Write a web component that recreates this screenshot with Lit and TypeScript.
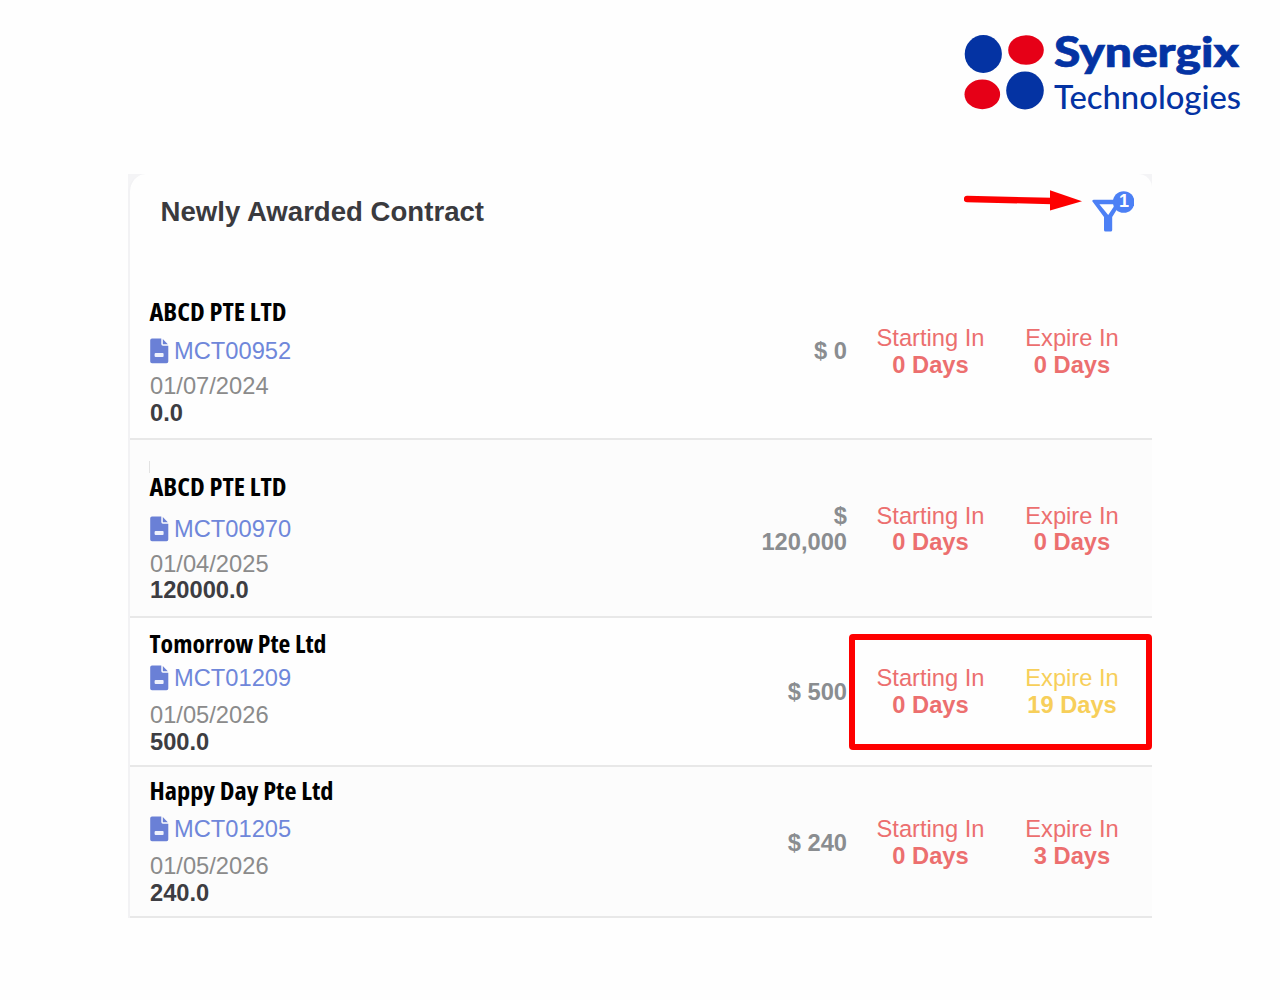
import { LitElement, html, css, svg, nothing } from 'lit';
import { customElement, property } from 'lit/decorators.js';
import { classMap } from 'lit/directives/class-map.js';

interface Contract {
    name: string;
    nameWidth: number;
    code: string;
    date: string;
    value: string;
    amount: string;
    starting: string;
    expire: string;
    layout: string;
    warn?: boolean;
    marked?: boolean;
    tick?: boolean;
}

const CONTRACTS: Contract[] = [
    { name: 'ABCD PTE LTD', nameWidth: 137, code: 'MCT00952', date: '01/07/2024', value: '0.0', amount: '$ 0', starting: '0 Days', expire: '0 Days', layout: 'first' },
    { name: 'ABCD PTE LTD', nameWidth: 137, code: 'MCT00970', date: '01/04/2025', value: '120000.0', amount: '$ 120,000', starting: '0 Days', expire: '0 Days', layout: 'second', tick: true },
    { name: 'Tomorrow Pte Ltd', nameWidth: 177, code: 'MCT01209', date: '01/05/2026', value: '500.0', amount: '$ 500', starting: '0 Days', expire: '19 Days', layout: 'third', warn: true, marked: true },
    { name: 'Happy Day Pte Ltd', nameWidth: 184, code: 'MCT01205', date: '01/05/2026', value: '240.0', amount: '$ 240', starting: '0 Days', expire: '3 Days', layout: 'fourth' },
];

@customElement('brand-logo')
class BrandLogo extends LitElement {
    static styles = css`
        :host {
            display: block;
            width: 276px;
            height: 84px;
        }
        svg {
            display: block;
            overflow: visible;
        }
        .blue {
            fill: #0433a3;
        }
        .red {
            fill: #e60017;
        }
        text {
            font-family: Lato, 'Liberation Sans', sans-serif;
            fill: #0433a3;
        }
        .brand {
            font-size: 41.5px;
            font-weight: 900;
            stroke: #0433a3;
            stroke-width: 0.7px;
        }
        .sub {
            font-size: 32px;
            font-weight: 500;
        }
    `;

    render() {
        return html`
            <svg width="276" height="84" viewBox="0 0 276 84">
                <ellipse class="blue" cx="19.3" cy="20" rx="18.6" ry="18.9"></ellipse>
                <ellipse class="red" cx="62" cy="16" rx="17.8" ry="14.8"></ellipse>
                <ellipse class="red" cx="18.3" cy="60.4" rx="17.8" ry="14.8"></ellipse>
                <ellipse class="blue" cx="61" cy="56.4" rx="18.8" ry="19"></ellipse>
                <text class="brand" x="90" y="33" textLength="185" lengthAdjust="spacingAndGlyphs">Synergix</text>
                <text class="sub" x="90" y="75.2" textLength="187" lengthAdjust="spacingAndGlyphs">Technologies</text>
            </svg>
        `;
    }
}

@customElement('filter-button')
class FilterButton extends LitElement {
    @property({ type: Number }) count = 0;

    static styles = css`
        :host {
            display: block;
            width: 44px;
            height: 44px;
        }
        svg {
            display: block;
        }
        .shape {
            fill: #4c80f5;
        }
        .hole {
            fill: #fff;
        }
        text {
            font: bold 18px 'Liberation Sans', Arial, sans-serif;
            fill: #fff;
            text-anchor: middle;
        }
    `;

    render() {
        return html`
            <svg width="44" height="44" viewBox="0 0 44 44">
                <path class="shape" d="M2.3 11.2 Q2 9.7 3.6 9.7 H33 L22.2 27 V40 Q22.2 41.6 20.6 41.6 H15.6 Q14 41.6 14 40 V27 Z"></path>
                <path class="hole" d="M9.4 14.3 H25.4 L18.2 25 Z"></path>
                <circle class="shape" cx="33.7" cy="12" r="10.8"></circle>
                <text x="34" y="17">${this.count}</text>
            </svg>
        `;
    }
}

@customElement('contract-row')
class ContractRow extends LitElement {
    @property({ attribute: false }) contract!: Contract;

    static styles = css`
        :host {
            display: block;
        }
        .row {
            position: relative;
            box-sizing: border-box;
            display: grid;
            grid-template-columns: 1fr 103px 141px 142px;
            padding: 0 9px 0 20px;
            border-bottom: 2px solid #e8e8e8;
            line-height: 26.5px;
        }
        .first {
            height: 178px;
            --top: 36px;
            --name-gap: 10px;
            --link-gap: 8.5px;
            --drop: 3px;
        }
        .second {
            height: 178px;
            --top: 33px;
            --name-gap: 12.5px;
            --link-gap: 8.5px;
            --drop: 2px;
            background: #fcfcfc;
        }
        .third {
            height: 149px;
            --top: 12px;
            --name-gap: 5px;
            --link-gap: 10.5px;
            --drop: 0.5px;
        }
        .fourth {
            height: 151px;
            --top: 10px;
            --name-gap: 9px;
            --link-gap: 10.5px;
            --drop: 2.5px;
            background: #fcfcfc;
        }
        .info {
            display: flex;
            flex-direction: column;
            padding-top: var(--top);
        }
        .name {
            display: block;
            overflow: visible;
            margin-bottom: var(--name-gap);
        }
        .name text {
            font-family: 'Open Sans', 'Noto Sans', sans-serif;
            font-size: 25.5px;
            font-weight: 700;
            font-stretch: 75%;
            fill: #000;
        }
        .link {
            display: flex;
            align-items: center;
            gap: 5px;
            margin-bottom: var(--link-gap);
            color: #6f87da;
        }
        .link svg {
            display: block;
            fill: #6a80d6;
        }
        .link .dash {
            fill: #eef1fc;
        }
        .date {
            color: #8b8b8b;
        }
        .value {
            font-weight: bold;
            color: #3d3d42;
        }
        .amount {
            align-self: center;
            padding: var(--drop) 13px 0 0;
            text-align: right;
            font-weight: bold;
            color: #8a8d90;
        }
        .due {
            align-self: center;
            padding-top: var(--drop);
            text-align: center;
            color: #ec6f6f;
        }
        .due b {
            display: block;
        }
        .warn {
            color: #f7cf5a;
        }
        .mark {
            position: absolute;
            box-sizing: border-box;
            top: 16px;
            right: 0;
            width: 303px;
            height: 116px;
            border: 6px solid #fe0000;
            border-radius: 4px;
        }
        .tick {
            position: absolute;
            left: 19px;
            top: 21px;
            width: 1px;
            height: 12px;
            background: #e2e2e2;
        }
    `;

    render() {
        const c = this.contract;
        return html`
            <div class="row ${c.layout}">
                <div class="info">
                    <svg class="name" width=${c.nameWidth} height="30">
                        <text x="-0.5" y="23" textLength=${c.nameWidth} lengthAdjust="spacingAndGlyphs">${c.name}</text>
                    </svg>
                    <div class="link">${this._renderIcon()}<span>${c.code}</span></div>
                    <div class="date">${c.date}</div>
                    <div class="value">${c.value}</div>
                </div>
                <div class="amount">${c.amount}</div>
                <div class="due">Starting In<b>${c.starting}</b></div>
                <div class=${classMap({ due: true, warn: !!c.warn })}>Expire In<b>${c.expire}</b></div>
                ${c.marked ? html`<div class="mark"></div>` : nothing}
                ${c.tick ? html`<div class="tick"></div>` : nothing}
            </div>
        `;
    }

    _renderIcon() {
        return html`
            <svg width="19" height="26" viewBox="0 0 19 26">
                ${svg`
                    <path d="M2 0.5 H11.3 V6 Q11.3 7.8 13 7.8 H18.3 V23.5 Q18.3 25.3 16.5 25.3 H2 Q0.2 25.3 0.2 23.5 V2.3 Q0.2 0.5 2 0.5 Z"></path>
                    <path d="M12.8 1 L17.8 6.3 H12.8 Z"></path>
                    <rect class="dash" x="4.6" y="15" width="9" height="4" rx="1"></rect>
                `}
            </svg>
        `;
    }
}

@customElement('app-root')
class AppRoot extends LitElement {
    static styles = css`
        :host {
            display: block;
            box-sizing: border-box;
            width: 1280px;
            height: 1000px;
            overflow: hidden;
            background: #fefefe;
            font-family: 'Liberation Sans', Arial, sans-serif;
            font-size: 23.7px;
        }
        .top {
            box-sizing: border-box;
            display: flex;
            justify-content: flex-end;
            height: 174px;
            padding: 34px 40px 0 0;
        }
        .frame {
            width: 1024px;
            margin: 0 auto;
            background: linear-gradient(#f4f4f6, #f4f4f6) top / 100% 20px no-repeat;
        }
        .card {
            box-sizing: border-box;
            border-left: 2px solid #f2f2f4;
            border-radius: 18px 14px 0 0;
            background: #fefefe;
        }
        .header {
            position: relative;
            box-sizing: border-box;
            display: flex;
            justify-content: space-between;
            height: 88px;
            padding: 16px 18px 0 30.5px;
        }
        .title {
            margin: 6px 0 0;
            font-size: 27.6px;
            line-height: 32px;
            font-weight: bold;
            color: #3a3a3e;
        }
        .arrow {
            position: absolute;
            left: 834px;
            top: 14px;
        }
    `;

    render() {
        return html`
            <div class="top"><brand-logo></brand-logo></div>
            <div class="frame">
                <div class="card">
                    <div class="header">
                        <h2 class="title">Newly Awarded Contract</h2>
                        <filter-button .count=${1}></filter-button>
                        <svg class="arrow" width="120" height="26" viewBox="0 0 120 26">
                            <path d="M3 11 L88 13" stroke="#fe0000" stroke-width="6.4" stroke-linecap="round"></path>
                            <path d="M86 2.3 L118 13.3 L86 22.6 Z" fill="#fe0000"></path>
                        </svg>
                    </div>
                    ${CONTRACTS.map(contract => html`<contract-row .contract=${contract}></contract-row>`)}
                </div>
            </div>
        `;
    }
}
